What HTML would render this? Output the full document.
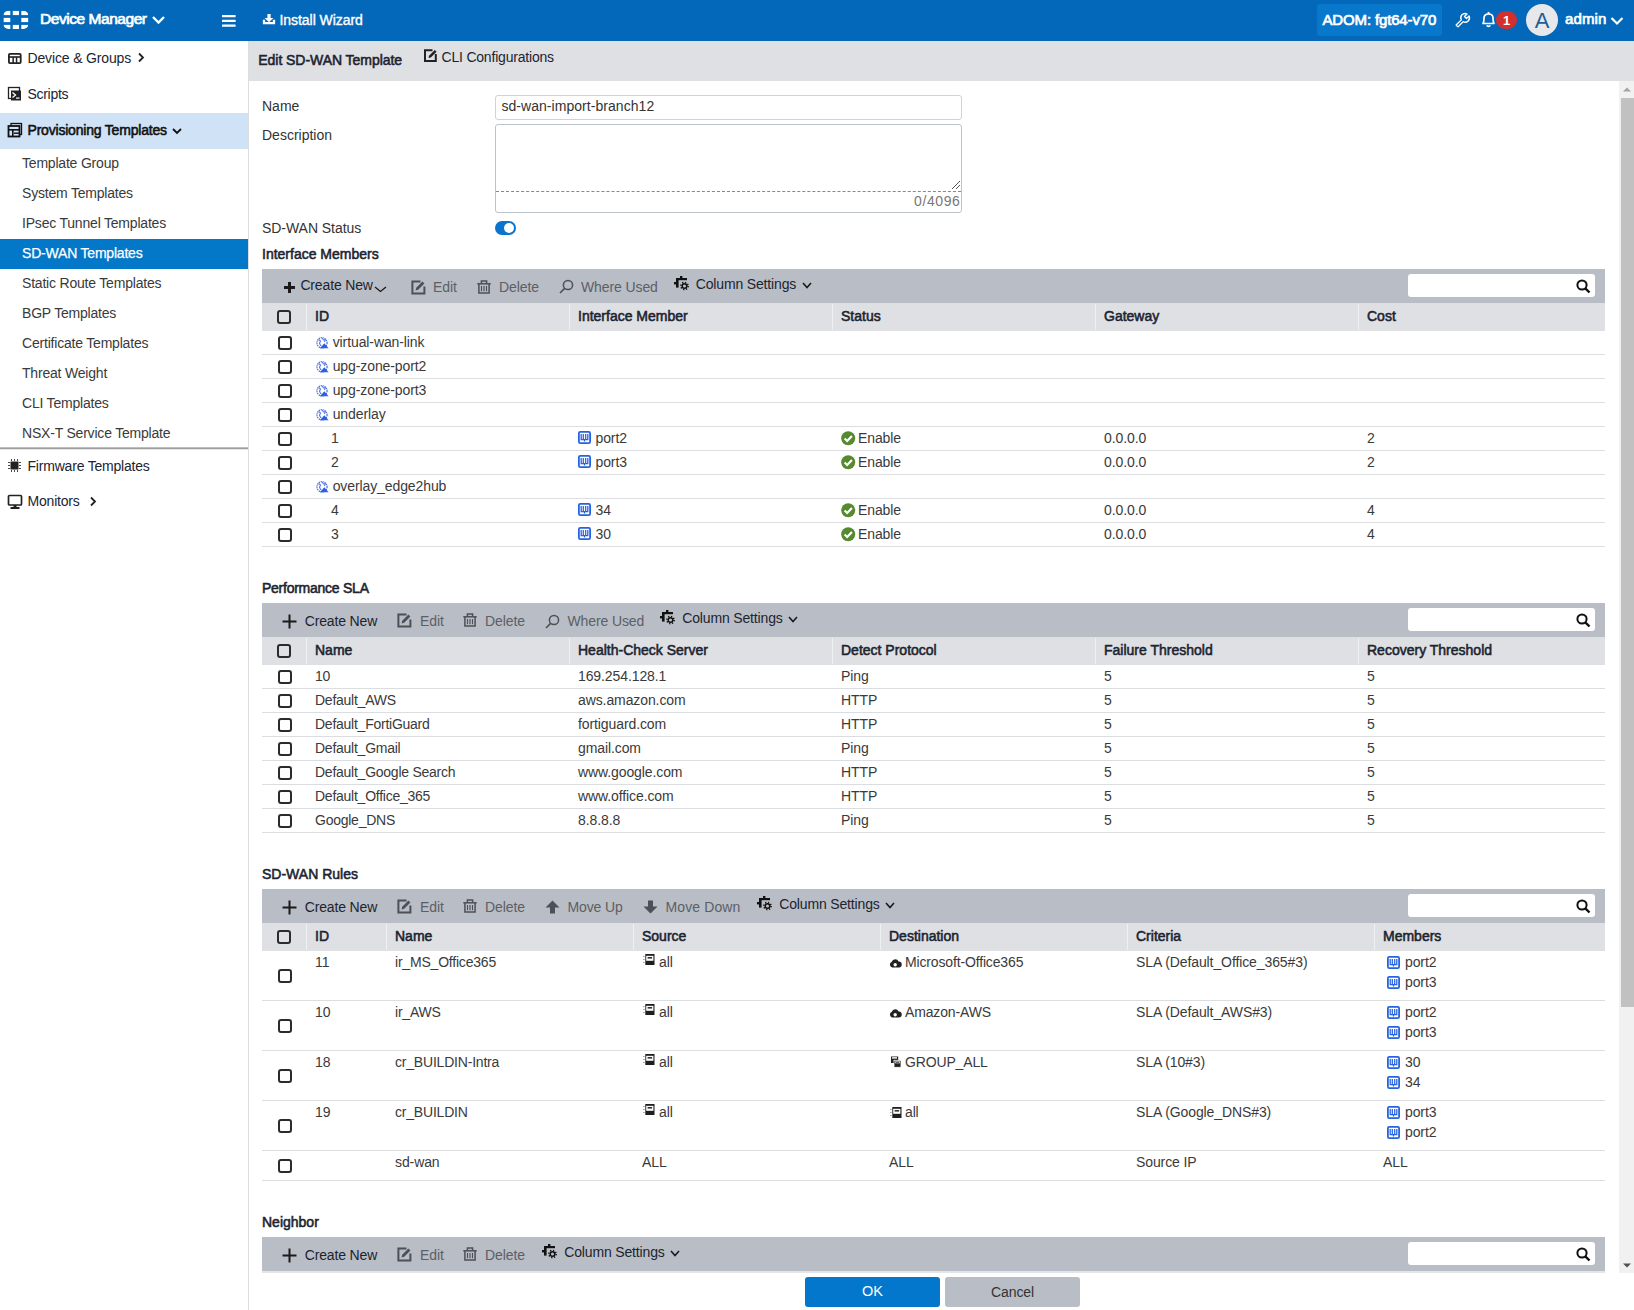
<!DOCTYPE html>
<html><head><meta charset="utf-8">
<style>
*{box-sizing:border-box;margin:0;padding:0}
html,body{width:1634px;height:1310px;overflow:hidden;background:#fff;font-family:"Liberation Sans",sans-serif;font-size:14px;color:#333}
.t{position:absolute;white-space:nowrap}
.r{position:absolute;display:block}
</style></head>
<body>

<div class="r" style="left:0px;top:0px;width:1634px;height:41px;background:#0368b9;"></div>
<svg class="r" style="left:0px;top:0px;" width="34" height="40" viewBox="0 0 34 40"><defs><clipPath id="lc"><rect x="3.4" y="10.7" width="25" height="18.3" rx="5" ry="5"/></clipPath></defs><g clip-path="url(#lc)"><rect x="3.4" y="10.7" width="6.90" height="4.40" fill="#fff"/><rect x="3.4" y="17.9" width="6.90" height="4.20" fill="#fff"/><rect x="3.4" y="24.9" width="6.90" height="4.10" fill="#fff"/><rect x="12.8" y="10.7" width="6.20" height="4.40" fill="#fff"/><rect x="12.8" y="24.9" width="6.20" height="4.10" fill="#fff"/><rect x="21.3" y="10.7" width="7.10" height="4.40" fill="#fff"/><rect x="21.3" y="17.9" width="7.10" height="4.20" fill="#fff"/><rect x="21.3" y="24.9" width="7.10" height="4.10" fill="#fff"/></g></svg>
<div class="t" style="left:40px;top:11.38px;font-size:15.5px;line-height:15.5px;color:#fff;letter-spacing:-0.45px;-webkit-text-stroke:0.7px #fff;">Device Manager</div>
<svg class="r" style="left:151px;top:15px;" width="15" height="10" viewBox="0 0 15 10"><path d="M2 2 L7.5 7.5 L13 2" stroke="#fff" stroke-width="2.4" fill="none"/></svg>
<svg class="r" style="left:221px;top:13px;" width="16" height="16" viewBox="0 0 16 16"><rect x="1" y="2" width="13.6" height="2.2" rx="0.5" fill="#fff"/><rect x="1" y="6.8" width="13.6" height="2.2" rx="0.5" fill="#fff"/><rect x="1" y="11.5" width="13.6" height="2.2" rx="0.5" fill="#fff"/></svg>
<svg class="r" style="left:262px;top:13px;" width="14" height="12" viewBox="0 0 14 12"><rect x="5.4" y="1" width="3.2" height="4.5" fill="#fff"/><path d="M2.6 5 H11.4 L7 9.3 Z" fill="#fff"/><path d="M2 6.8 V10.1 H12 V6.8" stroke="#fff" stroke-width="2.3" fill="none"/></svg>
<div class="t" style="left:279.5px;top:12.65px;font-size:14px;line-height:14px;color:#fff;letter-spacing:-0.05px;-webkit-text-stroke:0.35px #fff;">Install Wizard</div>
<div class="r" style="left:1317px;top:4px;width:125px;height:32px;background:#0878cc;border-radius:3px;"></div>
<div class="t" style="left:1322.5px;top:11.90px;font-size:15px;line-height:15px;color:#fff;letter-spacing:-0.15px;-webkit-text-stroke:0.7px #fff;">ADOM: fgt64-v70</div>
<svg class="r" style="left:1453px;top:11px;" width="19" height="19" viewBox="0 0 19 19"><g transform="translate(9.5 9.5) rotate(45) translate(-8 -8.5)"><path d="M6.7 16.2 L6.7 8.9 A4.3 4.3 0 0 1 6.6 0.7 L6.6 4.3 L9.4 4.3 L9.4 0.7 A4.3 4.3 0 0 1 9.3 8.9 L9.3 16.2 Z" stroke="#fff" stroke-width="1.35" fill="none" stroke-linejoin="round"/></g></svg>
<svg class="r" style="left:1480px;top:11px;" width="17" height="17" viewBox="0 0 17 17"><path d="M3 12.5 C4 11 4 9 4 7 C4 4.5 5.8 3 8.5 3 C11.2 3 13 4.5 13 7 C13 9 13 11 14 12.5 Z" stroke="#fff" stroke-width="1.7" fill="none" stroke-linejoin="round"/><path d="M6.8 14.2 A1.8 1.8 0 0 0 10.2 14.2" stroke="#fff" stroke-width="1.6" fill="none"/><rect x="7.6" y="1" width="1.8" height="2.2" fill="#fff"/></svg>
<svg class="r" style="left:1496px;top:11px;" width="21" height="18" viewBox="0 0 21 18"><rect x="0" y="0" width="21" height="18" rx="9" fill="#d32f2f"/></svg>
<div class="t" style="left:1206.5px;width:600px;text-align:center;top:13.50px;font-size:13px;line-height:13px;font-weight:bold;color:#fff;">1</div>
<svg class="r" style="left:1526px;top:4px;" width="32" height="32" viewBox="0 0 32 32"><circle cx="16" cy="16" r="16" fill="#e6e8ec"/></svg>
<div class="t" style="left:1242px;width:600px;text-align:center;top:9.88px;font-size:22px;line-height:22px;color:#235e94;">A</div>
<div class="t" style="left:1565px;top:11.30px;font-size:15px;line-height:15px;color:#fff;letter-spacing:0.1px;-webkit-text-stroke:0.7px #fff;">admin</div>
<svg class="r" style="left:1609px;top:16px;" width="16" height="10" viewBox="0 0 16 10"><path d="M2.5 2 L8 7.5 L13.5 2" stroke="#fff" stroke-width="2.2" fill="none"/></svg>
<div class="r" style="left:248px;top:41px;width:1px;height:1269px;background:#dcdde1;"></div>
<svg class="r" style="left:7px;top:52px;" width="15" height="12" viewBox="0 0 15 12"><rect x="1.9" y="1.9" width="11.8" height="9.2" rx="1" fill="none" stroke="#222" stroke-width="1.8"/><rect x="2" y="4.2" width="11.6" height="1.6" fill="#222"/><rect x="5.4" y="5" width="1.5" height="6" fill="#222"/><rect x="8.8" y="5" width="1.5" height="6" fill="#222"/></svg>
<div class="t" style="left:27.5px;top:51.15px;font-size:14px;line-height:14px;color:#1c2430;letter-spacing:-0.15px;">Device &amp; Groups</div>
<svg class="r" style="left:136px;top:51px;" width="10" height="12" viewBox="0 0 10 12"><path d="M3 2.5 L7 6.5 L3 10.5" stroke="#222" stroke-width="1.8" fill="none"/></svg>
<svg class="r" style="left:7px;top:86px;" width="16" height="16" viewBox="0 0 16 16"><rect x="1.5" y="1.5" width="11" height="11" fill="none" stroke="#222" stroke-width="1.3"/><rect x="4" y="4.5" width="10" height="10" fill="#222"/><path d="M5.5 6.5 L8.5 9 L5.5 11.5" stroke="#fff" stroke-width="1.3" fill="none"/><rect x="9" y="11.5" width="3.5" height="1.2" fill="#fff"/></svg>
<div class="t" style="left:27.5px;top:87.15px;font-size:14px;line-height:14px;color:#1c2430;letter-spacing:-0.3px;">Scripts</div>
<div class="r" style="left:0px;top:113px;width:248px;height:36px;background:#cfe2f6;"></div>
<svg class="r" style="left:7px;top:122px;" width="16" height="16" viewBox="0 0 16 16"><rect x="4" y="1.5" width="10.5" height="11" fill="none" stroke="#111" stroke-width="1.3"/><rect x="1.5" y="4" width="11" height="10.5" fill="#cfe2f6" stroke="#111" stroke-width="1.8"/><rect x="1.5" y="7" width="11" height="1.6" fill="#111"/><rect x="5" y="7" width="1.6" height="7" fill="#111"/><rect x="7" y="10.5" width="5" height="1.4" fill="#111"/></svg>
<div class="t" style="left:27.5px;top:122.65px;font-size:14px;line-height:14px;color:#111;letter-spacing:-0.2px;-webkit-text-stroke:0.55px #111;">Provisioning Templates</div>
<svg class="r" style="left:171px;top:126px;" width="12" height="10" viewBox="0 0 12 10"><path d="M2 3 L6 7 L10 3" stroke="#111" stroke-width="1.8" fill="none"/></svg>
<div class="t" style="left:22px;top:155.85px;font-size:14px;line-height:14px;color:#3a3a3a;letter-spacing:-0.2px;">Template Group</div>
<div class="t" style="left:22px;top:185.85px;font-size:14px;line-height:14px;color:#3a3a3a;letter-spacing:-0.2px;">System Templates</div>
<div class="t" style="left:22px;top:215.85px;font-size:14px;line-height:14px;color:#3a3a3a;letter-spacing:-0.2px;">IPsec Tunnel Templates</div>
<div class="r" style="left:0px;top:239px;width:248px;height:30px;background:#0377c8;"></div>
<div class="t" style="left:22px;top:245.85px;font-size:14px;line-height:14px;color:#fff;letter-spacing:-0.2px;-webkit-text-stroke:0.25px #fff;">SD-WAN Templates</div>
<div class="t" style="left:22px;top:275.85px;font-size:14px;line-height:14px;color:#3a3a3a;letter-spacing:-0.2px;">Static Route Templates</div>
<div class="t" style="left:22px;top:305.85px;font-size:14px;line-height:14px;color:#3a3a3a;letter-spacing:-0.2px;">BGP Templates</div>
<div class="t" style="left:22px;top:335.85px;font-size:14px;line-height:14px;color:#3a3a3a;letter-spacing:-0.2px;">Certificate Templates</div>
<div class="t" style="left:22px;top:365.85px;font-size:14px;line-height:14px;color:#3a3a3a;letter-spacing:-0.2px;">Threat Weight</div>
<div class="t" style="left:22px;top:395.85px;font-size:14px;line-height:14px;color:#3a3a3a;letter-spacing:-0.2px;">CLI Templates</div>
<div class="t" style="left:22px;top:425.85px;font-size:14px;line-height:14px;color:#3a3a3a;letter-spacing:-0.2px;">NSX-T Service Template</div>
<div class="r" style="left:0px;top:447px;width:248px;height:1px;background:#bdbdbd;"></div>
<div class="r" style="left:0px;top:448px;width:248px;height:1px;background:#9e9e9e;"></div>
<div class="r" style="left:0px;top:449px;width:248px;height:1px;background:#e6e6e6;"></div>
<svg class="r" style="left:7px;top:458px;" width="15" height="15" viewBox="0 0 15 15"><rect x="3.5" y="3.5" width="8" height="8" fill="#222"/><path d="M1 4.5 H3 M1 7.5 H3 M1 10.5 H3 M12 4.5 H14 M12 7.5 H14 M12 10.5 H14 M4.5 1 V3 M7.5 1 V3 M10.5 1 V3 M4.5 12 V14 M7.5 12 V14 M10.5 12 V14" stroke="#333" stroke-width="0.9"/></svg>
<div class="t" style="left:27.5px;top:458.65px;font-size:14px;line-height:14px;color:#1c2430;letter-spacing:-0.2px;">Firmware Templates</div>
<svg class="r" style="left:7px;top:494px;" width="16" height="16" viewBox="0 0 16 16"><rect x="1.5" y="1.5" width="13" height="9.5" rx="1" fill="none" stroke="#222" stroke-width="1.7"/><rect x="6.5" y="11" width="3" height="2" fill="#222"/><rect x="3.5" y="13" width="9" height="2" fill="#222"/></svg>
<div class="t" style="left:27.5px;top:494.35px;font-size:14px;line-height:14px;color:#1c2430;letter-spacing:-0.2px;">Monitors</div>
<svg class="r" style="left:88px;top:495px;" width="10" height="12" viewBox="0 0 10 12"><path d="M3 2.5 L7 6.5 L3 10.5" stroke="#222" stroke-width="1.8" fill="none"/></svg>
<div class="r" style="left:249px;top:41px;width:1385px;height:40px;background:#dfe0e4;"></div>
<div class="t" style="left:258.3px;top:53.45px;font-size:14px;line-height:14px;color:#1c2430;letter-spacing:-0.05px;-webkit-text-stroke:0.55px #1c2430;">Edit SD-WAN Template</div>
<svg class="r" style="left:423px;top:48px;" width="15" height="15" viewBox="0 0 15 15"><path d="M9.5 2.2 H2 V13 H12.8 V6" stroke="#222" stroke-width="2" fill="none"/><path d="M5.5 10 L6 7.8 L11.8 2 L13.6 3.8 L7.8 9.6 Z" fill="#222"/></svg>
<div class="t" style="left:441.5px;top:49.65px;font-size:14px;line-height:14px;color:#1c2430;letter-spacing:-0.2px;">CLI Configurations</div>
<div class="t" style="left:262px;top:99.15px;font-size:14px;line-height:14px;color:#333;">Name</div>
<div class="r" style="left:495px;top:95px;width:467px;height:25px;background:#fff;border:1px solid #cfd2d6;border-radius:3px;"></div>
<div class="t" style="left:501.4px;top:99.15px;font-size:14px;line-height:14px;color:#333;letter-spacing:0.05px;">sd-wan-import-branch12</div>
<div class="t" style="left:262px;top:127.95px;font-size:14px;line-height:14px;color:#333;">Description</div>
<div class="r" style="left:495px;top:124px;width:467px;height:89px;background:#fff;border:1px solid #bcc3ca;border-radius:3px;"></div>
<div class="r" style="left:496px;top:191px;width:465px;height:0;border-top:1px dashed #888;"></div>
<svg class="r" style="left:950px;top:180px;" width="11" height="10" viewBox="0 0 11 10"><path d="M2 9 L10 1 M6 9 L10 5" stroke="#555" stroke-width="1"/></svg>
<div class="t" style="right:673.5px;top:193.95px;font-size:14px;line-height:14px;color:#777;letter-spacing:0.6px;">0/4096</div>
<div class="t" style="left:262px;top:220.95px;font-size:14px;line-height:14px;color:#333;letter-spacing:-0.05px;">SD-WAN Status</div>
<svg class="r" style="left:495px;top:221px;" width="21" height="14" viewBox="0 0 21 14"><rect x="0" y="0" width="21" height="14" rx="7" fill="#0a74cf"/><circle cx="14" cy="7" r="5" fill="#fff"/></svg>
<div class="t" style="left:262px;top:246.95px;font-size:14px;line-height:14px;color:#1c2430;letter-spacing:0px;-webkit-text-stroke:0.55px #1c2430;">Interface Members</div>
<div class="r" style="left:262px;top:269px;width:1343px;height:34px;background:#b9bdc5;"></div>
<svg class="r" style="left:284.2px;top:282px;" width="11" height="11" viewBox="0 0 11 11"><path d="M5.5 0 V11 M0 5.5 H11" stroke="#1a1a1a" stroke-width="3"/></svg>
<div class="t" style="left:300.4px;top:278.05px;font-size:14px;line-height:14px;color:#1c2430;letter-spacing:-0.15px;">Create New</div>
<svg class="r" style="left:374px;top:285.5px;" width="13" height="7" viewBox="0 0 13 7"><path d="M1 1 L6.5 5.5 L12 1" stroke="#1a1a1a" stroke-width="1.35" fill="none"/></svg>
<svg class="r" style="left:411px;top:279.7px;" width="15" height="15" viewBox="0 0 15 15"><path d="M9.5 1.6 H1.4 V13.6 H13.4 V6.5" stroke="#4d5055" stroke-width="2" fill="none" stroke-linejoin="miter"/><path d="M4.6 10.4 L5.2 7.8 L11.4 1.6 L13.4 3.6 L7.2 9.8 Z" fill="#4d5055"/></svg>
<div class="t" style="left:433px;top:280.45px;font-size:14px;line-height:14px;color:#5c6066;letter-spacing:-0.1px;">Edit</div>
<svg class="r" style="left:477px;top:279.5px;" width="14" height="15" viewBox="0 0 14 15"><path d="M0.3 3.8 H13.7" stroke="#4d5055" stroke-width="1.5"/><path d="M4.4 3.6 V0.9 H9.6 V3.6" stroke="#4d5055" stroke-width="1.5" fill="none"/><path d="M1.9 4 V13.1 H12.1 V4" stroke="#4d5055" stroke-width="1.5" fill="none"/><path d="M4.5 6 V11.3 M7 6 V11.3 M9.5 6 V11.3" stroke="#4d5055" stroke-width="1.15"/></svg>
<div class="t" style="left:499px;top:280.45px;font-size:14px;line-height:14px;color:#5c6066;letter-spacing:-0.1px;">Delete</div>
<svg class="r" style="left:559px;top:279.2px;" width="15" height="15" viewBox="0 0 15 15"><circle cx="9" cy="6" r="4.6" stroke="#4d5055" stroke-width="1.5" fill="none"/><path d="M5.6 9.4 L1 14" stroke="#4d5055" stroke-width="1.6"/></svg>
<div class="t" style="left:581px;top:280.45px;font-size:14px;line-height:14px;color:#5c6066;letter-spacing:-0.1px;">Where Used</div>
<svg class="r" style="left:673.8px;top:274.8px;" width="16" height="16" viewBox="0 0 16 16"><rect x="2" y="3" width="11" height="2.2" fill="#111"/><rect x="6" y="1" width="2.4" height="2.2" fill="#111"/><rect x="2" y="3" width="2.6" height="9.6" fill="#111"/><rect x="0" y="7" width="2.2" height="2.4" fill="#111"/><circle cx="10.5" cy="11" r="2.3" fill="none" stroke="#111" stroke-width="1.5"/><circle cx="10.5" cy="11" r="3.6" fill="none" stroke="#111" stroke-width="1.6" stroke-dasharray="1.2 1.63"/></svg>
<div class="t" style="left:695.7px;top:277.15px;font-size:14px;line-height:14px;color:#1c2430;letter-spacing:-0.15px;">Column Settings</div>
<svg class="r" style="left:802px;top:281.5px;" width="10" height="7" viewBox="0 0 10 7"><path d="M1 1 L5.0 5.5 L9 1" stroke="#1a1a1a" stroke-width="1.6" fill="none"/></svg>
<div class="r" style="left:1408px;top:274px;width:187px;height:23px;background:#fff;border-radius:3px;"></div>
<svg class="r" style="left:1576px;top:279px;" width="15" height="15" viewBox="0 0 15 15"><circle cx="6" cy="6" r="4.6" stroke="#111" stroke-width="2" fill="none"/><path d="M9.3 9.3 L13.5 13.5" stroke="#111" stroke-width="2.4"/></svg>
<div class="r" style="left:262px;top:303px;width:1343px;height:28px;background:#dfe0e4;"></div>
<div class="r" style="left:277px;top:310px;width:14px;height:14px;border:2px solid #2b2b2b;border-radius:3px;background:transparent;"></div>
<div class="r" style="left:306px;top:304px;width:1px;height:26px;background:#eef0f2;"></div>
<div class="r" style="left:569px;top:304px;width:1px;height:26px;background:#eef0f2;"></div>
<div class="r" style="left:832px;top:304px;width:1px;height:26px;background:#eef0f2;"></div>
<div class="r" style="left:1095px;top:304px;width:1px;height:26px;background:#eef0f2;"></div>
<div class="r" style="left:1358px;top:304px;width:1px;height:26px;background:#eef0f2;"></div>
<div class="t" style="left:315px;top:309.45px;font-size:14px;line-height:14px;color:#1c2430;letter-spacing:0px;-webkit-text-stroke:0.55px #1c2430;">ID</div>
<div class="t" style="left:578px;top:309.45px;font-size:14px;line-height:14px;color:#1c2430;letter-spacing:0px;-webkit-text-stroke:0.55px #1c2430;">Interface Member</div>
<div class="t" style="left:841px;top:309.45px;font-size:14px;line-height:14px;color:#1c2430;letter-spacing:0px;-webkit-text-stroke:0.55px #1c2430;">Status</div>
<div class="t" style="left:1104px;top:309.45px;font-size:14px;line-height:14px;color:#1c2430;letter-spacing:0px;-webkit-text-stroke:0.55px #1c2430;">Gateway</div>
<div class="t" style="left:1367px;top:309.45px;font-size:14px;line-height:14px;color:#1c2430;letter-spacing:0px;-webkit-text-stroke:0.55px #1c2430;">Cost</div>
<div class="r" style="left:278px;top:336px;width:14px;height:14px;border:2px solid #2b2b2b;border-radius:3px;background:#fff;"></div>
<svg class="r" style="left:316px;top:337px;" width="13" height="12" viewBox="0 0 13 12"><circle cx="6" cy="5.8" r="5.1" fill="none" stroke="#4a6ee8" stroke-width="1.2" stroke-dasharray="1.3 0.7"/><path d="M2.5 2.5 L4.5 4 L3.5 6.5 L5 9 M6 1 L7.5 3 L10 2.5 M8 4.5 L9.5 3.5" stroke="#5577ea" stroke-width="1.1" fill="none"/><path d="M3.8 11.2 L8.3 6.3 L12.6 11.2 Z" fill="#2a5fe6"/></svg>
<div class="t" style="left:332.7px;top:335.35px;font-size:14px;line-height:14px;color:#3a3a3a;letter-spacing:-0.1px;">virtual-wan-link</div>
<div class="r" style="left:262px;top:354px;width:1343px;height:1px;background:#dcdde0;"></div>
<div class="r" style="left:278px;top:360px;width:14px;height:14px;border:2px solid #2b2b2b;border-radius:3px;background:#fff;"></div>
<svg class="r" style="left:316px;top:361px;" width="13" height="12" viewBox="0 0 13 12"><circle cx="6" cy="5.8" r="5.1" fill="none" stroke="#4a6ee8" stroke-width="1.2" stroke-dasharray="1.3 0.7"/><path d="M2.5 2.5 L4.5 4 L3.5 6.5 L5 9 M6 1 L7.5 3 L10 2.5 M8 4.5 L9.5 3.5" stroke="#5577ea" stroke-width="1.1" fill="none"/><path d="M3.8 11.2 L8.3 6.3 L12.6 11.2 Z" fill="#2a5fe6"/></svg>
<div class="t" style="left:332.7px;top:359.35px;font-size:14px;line-height:14px;color:#3a3a3a;letter-spacing:-0.1px;">upg-zone-port2</div>
<div class="r" style="left:262px;top:378px;width:1343px;height:1px;background:#dcdde0;"></div>
<div class="r" style="left:278px;top:384px;width:14px;height:14px;border:2px solid #2b2b2b;border-radius:3px;background:#fff;"></div>
<svg class="r" style="left:316px;top:385px;" width="13" height="12" viewBox="0 0 13 12"><circle cx="6" cy="5.8" r="5.1" fill="none" stroke="#4a6ee8" stroke-width="1.2" stroke-dasharray="1.3 0.7"/><path d="M2.5 2.5 L4.5 4 L3.5 6.5 L5 9 M6 1 L7.5 3 L10 2.5 M8 4.5 L9.5 3.5" stroke="#5577ea" stroke-width="1.1" fill="none"/><path d="M3.8 11.2 L8.3 6.3 L12.6 11.2 Z" fill="#2a5fe6"/></svg>
<div class="t" style="left:332.7px;top:383.35px;font-size:14px;line-height:14px;color:#3a3a3a;letter-spacing:-0.1px;">upg-zone-port3</div>
<div class="r" style="left:262px;top:402px;width:1343px;height:1px;background:#dcdde0;"></div>
<div class="r" style="left:278px;top:408px;width:14px;height:14px;border:2px solid #2b2b2b;border-radius:3px;background:#fff;"></div>
<svg class="r" style="left:316px;top:409px;" width="13" height="12" viewBox="0 0 13 12"><circle cx="6" cy="5.8" r="5.1" fill="none" stroke="#4a6ee8" stroke-width="1.2" stroke-dasharray="1.3 0.7"/><path d="M2.5 2.5 L4.5 4 L3.5 6.5 L5 9 M6 1 L7.5 3 L10 2.5 M8 4.5 L9.5 3.5" stroke="#5577ea" stroke-width="1.1" fill="none"/><path d="M3.8 11.2 L8.3 6.3 L12.6 11.2 Z" fill="#2a5fe6"/></svg>
<div class="t" style="left:332.7px;top:407.35px;font-size:14px;line-height:14px;color:#3a3a3a;letter-spacing:-0.1px;">underlay</div>
<div class="r" style="left:262px;top:426px;width:1343px;height:1px;background:#dcdde0;"></div>
<div class="r" style="left:278px;top:432px;width:14px;height:14px;border:2px solid #2b2b2b;border-radius:3px;background:#fff;"></div>
<div class="t" style="left:331px;top:431.35px;font-size:14px;line-height:14px;color:#3a3a3a;letter-spacing:-0.1px;">1</div>
<svg class="r" style="left:578px;top:431px;" width="13" height="13" viewBox="0 0 13 13"><rect x="0.9" y="0.9" width="11.2" height="11.2" rx="1.4" fill="none" stroke="#2563e3" stroke-width="1.8"/><path d="M3.2 3 V8.6 H9.8 V3 M5.3 3 V8.6 M7.7 3 V8.6 M6.5 8.6 V10.5" stroke="#2563e3" stroke-width="1.25" fill="none"/></svg>
<div class="t" style="left:595.5px;top:431.35px;font-size:14px;line-height:14px;color:#3a3a3a;letter-spacing:-0.1px;">port2</div>
<svg class="r" style="left:840.5px;top:431px;" width="15" height="15" viewBox="0 0 15 15"><circle cx="7.2" cy="7.2" r="7" fill="#578a2f"/><path d="M3.6 7.5 L6.2 10 L10.9 5" stroke="#fff" stroke-width="2.1" fill="none"/></svg>
<div class="t" style="left:858px;top:431.35px;font-size:14px;line-height:14px;color:#3a3a3a;letter-spacing:-0.1px;">Enable</div>
<div class="t" style="left:1104px;top:431.35px;font-size:14px;line-height:14px;color:#3a3a3a;letter-spacing:-0.1px;">0.0.0.0</div>
<div class="t" style="left:1367px;top:431.35px;font-size:14px;line-height:14px;color:#3a3a3a;letter-spacing:-0.1px;">2</div>
<div class="r" style="left:262px;top:450px;width:1343px;height:1px;background:#dcdde0;"></div>
<div class="r" style="left:278px;top:456px;width:14px;height:14px;border:2px solid #2b2b2b;border-radius:3px;background:#fff;"></div>
<div class="t" style="left:331px;top:455.35px;font-size:14px;line-height:14px;color:#3a3a3a;letter-spacing:-0.1px;">2</div>
<svg class="r" style="left:578px;top:455px;" width="13" height="13" viewBox="0 0 13 13"><rect x="0.9" y="0.9" width="11.2" height="11.2" rx="1.4" fill="none" stroke="#2563e3" stroke-width="1.8"/><path d="M3.2 3 V8.6 H9.8 V3 M5.3 3 V8.6 M7.7 3 V8.6 M6.5 8.6 V10.5" stroke="#2563e3" stroke-width="1.25" fill="none"/></svg>
<div class="t" style="left:595.5px;top:455.35px;font-size:14px;line-height:14px;color:#3a3a3a;letter-spacing:-0.1px;">port3</div>
<svg class="r" style="left:840.5px;top:455px;" width="15" height="15" viewBox="0 0 15 15"><circle cx="7.2" cy="7.2" r="7" fill="#578a2f"/><path d="M3.6 7.5 L6.2 10 L10.9 5" stroke="#fff" stroke-width="2.1" fill="none"/></svg>
<div class="t" style="left:858px;top:455.35px;font-size:14px;line-height:14px;color:#3a3a3a;letter-spacing:-0.1px;">Enable</div>
<div class="t" style="left:1104px;top:455.35px;font-size:14px;line-height:14px;color:#3a3a3a;letter-spacing:-0.1px;">0.0.0.0</div>
<div class="t" style="left:1367px;top:455.35px;font-size:14px;line-height:14px;color:#3a3a3a;letter-spacing:-0.1px;">2</div>
<div class="r" style="left:262px;top:474px;width:1343px;height:1px;background:#dcdde0;"></div>
<div class="r" style="left:278px;top:480px;width:14px;height:14px;border:2px solid #2b2b2b;border-radius:3px;background:#fff;"></div>
<svg class="r" style="left:316px;top:481px;" width="13" height="12" viewBox="0 0 13 12"><circle cx="6" cy="5.8" r="5.1" fill="none" stroke="#4a6ee8" stroke-width="1.2" stroke-dasharray="1.3 0.7"/><path d="M2.5 2.5 L4.5 4 L3.5 6.5 L5 9 M6 1 L7.5 3 L10 2.5 M8 4.5 L9.5 3.5" stroke="#5577ea" stroke-width="1.1" fill="none"/><path d="M3.8 11.2 L8.3 6.3 L12.6 11.2 Z" fill="#2a5fe6"/></svg>
<div class="t" style="left:332.7px;top:479.35px;font-size:14px;line-height:14px;color:#3a3a3a;letter-spacing:-0.1px;">overlay_edge2hub</div>
<div class="r" style="left:262px;top:498px;width:1343px;height:1px;background:#dcdde0;"></div>
<div class="r" style="left:278px;top:504px;width:14px;height:14px;border:2px solid #2b2b2b;border-radius:3px;background:#fff;"></div>
<div class="t" style="left:331px;top:503.35px;font-size:14px;line-height:14px;color:#3a3a3a;letter-spacing:-0.1px;">4</div>
<svg class="r" style="left:578px;top:503px;" width="13" height="13" viewBox="0 0 13 13"><rect x="0.9" y="0.9" width="11.2" height="11.2" rx="1.4" fill="none" stroke="#2563e3" stroke-width="1.8"/><path d="M3.2 3 V8.6 H9.8 V3 M5.3 3 V8.6 M7.7 3 V8.6 M6.5 8.6 V10.5" stroke="#2563e3" stroke-width="1.25" fill="none"/></svg>
<div class="t" style="left:595.5px;top:503.35px;font-size:14px;line-height:14px;color:#3a3a3a;letter-spacing:-0.1px;">34</div>
<svg class="r" style="left:840.5px;top:503px;" width="15" height="15" viewBox="0 0 15 15"><circle cx="7.2" cy="7.2" r="7" fill="#578a2f"/><path d="M3.6 7.5 L6.2 10 L10.9 5" stroke="#fff" stroke-width="2.1" fill="none"/></svg>
<div class="t" style="left:858px;top:503.35px;font-size:14px;line-height:14px;color:#3a3a3a;letter-spacing:-0.1px;">Enable</div>
<div class="t" style="left:1104px;top:503.35px;font-size:14px;line-height:14px;color:#3a3a3a;letter-spacing:-0.1px;">0.0.0.0</div>
<div class="t" style="left:1367px;top:503.35px;font-size:14px;line-height:14px;color:#3a3a3a;letter-spacing:-0.1px;">4</div>
<div class="r" style="left:262px;top:522px;width:1343px;height:1px;background:#dcdde0;"></div>
<div class="r" style="left:278px;top:528px;width:14px;height:14px;border:2px solid #2b2b2b;border-radius:3px;background:#fff;"></div>
<div class="t" style="left:331px;top:527.35px;font-size:14px;line-height:14px;color:#3a3a3a;letter-spacing:-0.1px;">3</div>
<svg class="r" style="left:578px;top:527px;" width="13" height="13" viewBox="0 0 13 13"><rect x="0.9" y="0.9" width="11.2" height="11.2" rx="1.4" fill="none" stroke="#2563e3" stroke-width="1.8"/><path d="M3.2 3 V8.6 H9.8 V3 M5.3 3 V8.6 M7.7 3 V8.6 M6.5 8.6 V10.5" stroke="#2563e3" stroke-width="1.25" fill="none"/></svg>
<div class="t" style="left:595.5px;top:527.35px;font-size:14px;line-height:14px;color:#3a3a3a;letter-spacing:-0.1px;">30</div>
<svg class="r" style="left:840.5px;top:527px;" width="15" height="15" viewBox="0 0 15 15"><circle cx="7.2" cy="7.2" r="7" fill="#578a2f"/><path d="M3.6 7.5 L6.2 10 L10.9 5" stroke="#fff" stroke-width="2.1" fill="none"/></svg>
<div class="t" style="left:858px;top:527.35px;font-size:14px;line-height:14px;color:#3a3a3a;letter-spacing:-0.1px;">Enable</div>
<div class="t" style="left:1104px;top:527.35px;font-size:14px;line-height:14px;color:#3a3a3a;letter-spacing:-0.1px;">0.0.0.0</div>
<div class="t" style="left:1367px;top:527.35px;font-size:14px;line-height:14px;color:#3a3a3a;letter-spacing:-0.1px;">4</div>
<div class="r" style="left:262px;top:546px;width:1343px;height:1px;background:#dcdde0;"></div>
<div class="t" style="left:262px;top:581.15px;font-size:14px;line-height:14px;color:#1c2430;letter-spacing:-0.25px;-webkit-text-stroke:0.55px #1c2430;">Performance SLA</div>
<div class="r" style="left:262px;top:603px;width:1343px;height:34px;background:#b9bdc5;"></div>
<svg class="r" style="left:282px;top:613.5px;" width="15" height="15" viewBox="0 0 15 15"><path d="M7.5 0.5 V14.5 M0.5 7.5 H14.5" stroke="#1a1a1a" stroke-width="2"/></svg>
<div class="t" style="left:304.7px;top:614.15px;font-size:14px;line-height:14px;color:#1c2430;letter-spacing:-0.15px;">Create New</div>
<svg class="r" style="left:397px;top:613.0px;" width="15" height="15" viewBox="0 0 15 15"><path d="M9.5 1.6 H1.4 V13.6 H13.4 V6.5" stroke="#4d5055" stroke-width="2" fill="none" stroke-linejoin="miter"/><path d="M4.6 10.4 L5.2 7.8 L11.4 1.6 L13.4 3.6 L7.2 9.8 Z" fill="#4d5055"/></svg>
<div class="t" style="left:420px;top:614.15px;font-size:14px;line-height:14px;color:#5c6066;letter-spacing:-0.1px;">Edit</div>
<svg class="r" style="left:463px;top:613.0px;" width="14" height="15" viewBox="0 0 14 15"><path d="M0.3 3.8 H13.7" stroke="#4d5055" stroke-width="1.5"/><path d="M4.4 3.6 V0.9 H9.6 V3.6" stroke="#4d5055" stroke-width="1.5" fill="none"/><path d="M1.9 4 V13.1 H12.1 V4" stroke="#4d5055" stroke-width="1.5" fill="none"/><path d="M4.5 6 V11.3 M7 6 V11.3 M9.5 6 V11.3" stroke="#4d5055" stroke-width="1.15"/></svg>
<div class="t" style="left:485px;top:614.15px;font-size:14px;line-height:14px;color:#5c6066;letter-spacing:-0.1px;">Delete</div>
<svg class="r" style="left:545px;top:614px;" width="15" height="15" viewBox="0 0 15 15"><circle cx="9" cy="6" r="4.6" stroke="#4d5055" stroke-width="1.5" fill="none"/><path d="M5.6 9.4 L1 14" stroke="#4d5055" stroke-width="1.6"/></svg>
<div class="t" style="left:567.4px;top:614.15px;font-size:14px;line-height:14px;color:#5c6066;letter-spacing:-0.1px;">Where Used</div>
<svg class="r" style="left:659.8px;top:609.3px;" width="16" height="16" viewBox="0 0 16 16"><rect x="2" y="3" width="11" height="2.2" fill="#111"/><rect x="6" y="1" width="2.4" height="2.2" fill="#111"/><rect x="2" y="3" width="2.6" height="9.6" fill="#111"/><rect x="0" y="7" width="2.2" height="2.4" fill="#111"/><circle cx="10.5" cy="11" r="2.3" fill="none" stroke="#111" stroke-width="1.5"/><circle cx="10.5" cy="11" r="3.6" fill="none" stroke="#111" stroke-width="1.6" stroke-dasharray="1.2 1.63"/></svg>
<div class="t" style="left:682.2px;top:610.65px;font-size:14px;line-height:14px;color:#1c2430;letter-spacing:-0.15px;">Column Settings</div>
<svg class="r" style="left:788px;top:615.5px;" width="10" height="7" viewBox="0 0 10 7"><path d="M1 1 L5.0 5.5 L9 1" stroke="#1a1a1a" stroke-width="1.6" fill="none"/></svg>
<div class="r" style="left:1408px;top:608px;width:187px;height:23px;background:#fff;border-radius:3px;"></div>
<svg class="r" style="left:1576px;top:613px;" width="15" height="15" viewBox="0 0 15 15"><circle cx="6" cy="6" r="4.6" stroke="#111" stroke-width="2" fill="none"/><path d="M9.3 9.3 L13.5 13.5" stroke="#111" stroke-width="2.4"/></svg>
<div class="r" style="left:262px;top:637px;width:1343px;height:28px;background:#dfe0e4;"></div>
<div class="r" style="left:277px;top:644px;width:14px;height:14px;border:2px solid #2b2b2b;border-radius:3px;background:transparent;"></div>
<div class="r" style="left:306px;top:638px;width:1px;height:26px;background:#eef0f2;"></div>
<div class="r" style="left:569px;top:638px;width:1px;height:26px;background:#eef0f2;"></div>
<div class="r" style="left:832px;top:638px;width:1px;height:26px;background:#eef0f2;"></div>
<div class="r" style="left:1095px;top:638px;width:1px;height:26px;background:#eef0f2;"></div>
<div class="r" style="left:1358px;top:638px;width:1px;height:26px;background:#eef0f2;"></div>
<div class="t" style="left:315px;top:643.45px;font-size:14px;line-height:14px;color:#1c2430;letter-spacing:0px;-webkit-text-stroke:0.55px #1c2430;">Name</div>
<div class="t" style="left:578px;top:643.45px;font-size:14px;line-height:14px;color:#1c2430;letter-spacing:0px;-webkit-text-stroke:0.55px #1c2430;">Health-Check Server</div>
<div class="t" style="left:841px;top:643.45px;font-size:14px;line-height:14px;color:#1c2430;letter-spacing:0px;-webkit-text-stroke:0.55px #1c2430;">Detect Protocol</div>
<div class="t" style="left:1104px;top:643.45px;font-size:14px;line-height:14px;color:#1c2430;letter-spacing:0px;-webkit-text-stroke:0.55px #1c2430;">Failure Threshold</div>
<div class="t" style="left:1367px;top:643.45px;font-size:14px;line-height:14px;color:#1c2430;letter-spacing:0px;-webkit-text-stroke:0.55px #1c2430;">Recovery Threshold</div>
<div class="r" style="left:278px;top:670px;width:14px;height:14px;border:2px solid #2b2b2b;border-radius:3px;background:#fff;"></div>
<div class="t" style="left:315px;top:669.35px;font-size:14px;line-height:14px;color:#3a3a3a;letter-spacing:-0.25px;">10</div>
<div class="t" style="left:578px;top:669.35px;font-size:14px;line-height:14px;color:#3a3a3a;letter-spacing:-0.1px;">169.254.128.1</div>
<div class="t" style="left:841px;top:669.35px;font-size:14px;line-height:14px;color:#3a3a3a;letter-spacing:-0.1px;">Ping</div>
<div class="t" style="left:1104px;top:669.35px;font-size:14px;line-height:14px;color:#3a3a3a;letter-spacing:-0.1px;">5</div>
<div class="t" style="left:1367px;top:669.35px;font-size:14px;line-height:14px;color:#3a3a3a;letter-spacing:-0.1px;">5</div>
<div class="r" style="left:262px;top:688px;width:1343px;height:1px;background:#dcdde0;"></div>
<div class="r" style="left:278px;top:694px;width:14px;height:14px;border:2px solid #2b2b2b;border-radius:3px;background:#fff;"></div>
<div class="t" style="left:315px;top:693.35px;font-size:14px;line-height:14px;color:#3a3a3a;letter-spacing:-0.25px;">Default_AWS</div>
<div class="t" style="left:578px;top:693.35px;font-size:14px;line-height:14px;color:#3a3a3a;letter-spacing:-0.1px;">aws.amazon.com</div>
<div class="t" style="left:841px;top:693.35px;font-size:14px;line-height:14px;color:#3a3a3a;letter-spacing:-0.1px;">HTTP</div>
<div class="t" style="left:1104px;top:693.35px;font-size:14px;line-height:14px;color:#3a3a3a;letter-spacing:-0.1px;">5</div>
<div class="t" style="left:1367px;top:693.35px;font-size:14px;line-height:14px;color:#3a3a3a;letter-spacing:-0.1px;">5</div>
<div class="r" style="left:262px;top:712px;width:1343px;height:1px;background:#dcdde0;"></div>
<div class="r" style="left:278px;top:718px;width:14px;height:14px;border:2px solid #2b2b2b;border-radius:3px;background:#fff;"></div>
<div class="t" style="left:315px;top:717.35px;font-size:14px;line-height:14px;color:#3a3a3a;letter-spacing:-0.25px;">Default_FortiGuard</div>
<div class="t" style="left:578px;top:717.35px;font-size:14px;line-height:14px;color:#3a3a3a;letter-spacing:-0.1px;">fortiguard.com</div>
<div class="t" style="left:841px;top:717.35px;font-size:14px;line-height:14px;color:#3a3a3a;letter-spacing:-0.1px;">HTTP</div>
<div class="t" style="left:1104px;top:717.35px;font-size:14px;line-height:14px;color:#3a3a3a;letter-spacing:-0.1px;">5</div>
<div class="t" style="left:1367px;top:717.35px;font-size:14px;line-height:14px;color:#3a3a3a;letter-spacing:-0.1px;">5</div>
<div class="r" style="left:262px;top:736px;width:1343px;height:1px;background:#dcdde0;"></div>
<div class="r" style="left:278px;top:742px;width:14px;height:14px;border:2px solid #2b2b2b;border-radius:3px;background:#fff;"></div>
<div class="t" style="left:315px;top:741.35px;font-size:14px;line-height:14px;color:#3a3a3a;letter-spacing:-0.25px;">Default_Gmail</div>
<div class="t" style="left:578px;top:741.35px;font-size:14px;line-height:14px;color:#3a3a3a;letter-spacing:-0.1px;">gmail.com</div>
<div class="t" style="left:841px;top:741.35px;font-size:14px;line-height:14px;color:#3a3a3a;letter-spacing:-0.1px;">Ping</div>
<div class="t" style="left:1104px;top:741.35px;font-size:14px;line-height:14px;color:#3a3a3a;letter-spacing:-0.1px;">5</div>
<div class="t" style="left:1367px;top:741.35px;font-size:14px;line-height:14px;color:#3a3a3a;letter-spacing:-0.1px;">5</div>
<div class="r" style="left:262px;top:760px;width:1343px;height:1px;background:#dcdde0;"></div>
<div class="r" style="left:278px;top:766px;width:14px;height:14px;border:2px solid #2b2b2b;border-radius:3px;background:#fff;"></div>
<div class="t" style="left:315px;top:765.35px;font-size:14px;line-height:14px;color:#3a3a3a;letter-spacing:-0.25px;">Default_Google Search</div>
<div class="t" style="left:578px;top:765.35px;font-size:14px;line-height:14px;color:#3a3a3a;letter-spacing:-0.1px;">www.google.com</div>
<div class="t" style="left:841px;top:765.35px;font-size:14px;line-height:14px;color:#3a3a3a;letter-spacing:-0.1px;">HTTP</div>
<div class="t" style="left:1104px;top:765.35px;font-size:14px;line-height:14px;color:#3a3a3a;letter-spacing:-0.1px;">5</div>
<div class="t" style="left:1367px;top:765.35px;font-size:14px;line-height:14px;color:#3a3a3a;letter-spacing:-0.1px;">5</div>
<div class="r" style="left:262px;top:784px;width:1343px;height:1px;background:#dcdde0;"></div>
<div class="r" style="left:278px;top:790px;width:14px;height:14px;border:2px solid #2b2b2b;border-radius:3px;background:#fff;"></div>
<div class="t" style="left:315px;top:789.35px;font-size:14px;line-height:14px;color:#3a3a3a;letter-spacing:-0.25px;">Default_Office_365</div>
<div class="t" style="left:578px;top:789.35px;font-size:14px;line-height:14px;color:#3a3a3a;letter-spacing:-0.1px;">www.office.com</div>
<div class="t" style="left:841px;top:789.35px;font-size:14px;line-height:14px;color:#3a3a3a;letter-spacing:-0.1px;">HTTP</div>
<div class="t" style="left:1104px;top:789.35px;font-size:14px;line-height:14px;color:#3a3a3a;letter-spacing:-0.1px;">5</div>
<div class="t" style="left:1367px;top:789.35px;font-size:14px;line-height:14px;color:#3a3a3a;letter-spacing:-0.1px;">5</div>
<div class="r" style="left:262px;top:808px;width:1343px;height:1px;background:#dcdde0;"></div>
<div class="r" style="left:278px;top:814px;width:14px;height:14px;border:2px solid #2b2b2b;border-radius:3px;background:#fff;"></div>
<div class="t" style="left:315px;top:813.35px;font-size:14px;line-height:14px;color:#3a3a3a;letter-spacing:-0.25px;">Google_DNS</div>
<div class="t" style="left:578px;top:813.35px;font-size:14px;line-height:14px;color:#3a3a3a;letter-spacing:-0.1px;">8.8.8.8</div>
<div class="t" style="left:841px;top:813.35px;font-size:14px;line-height:14px;color:#3a3a3a;letter-spacing:-0.1px;">Ping</div>
<div class="t" style="left:1104px;top:813.35px;font-size:14px;line-height:14px;color:#3a3a3a;letter-spacing:-0.1px;">5</div>
<div class="t" style="left:1367px;top:813.35px;font-size:14px;line-height:14px;color:#3a3a3a;letter-spacing:-0.1px;">5</div>
<div class="r" style="left:262px;top:832px;width:1343px;height:1px;background:#dcdde0;"></div>
<div class="t" style="left:262px;top:867.45px;font-size:14px;line-height:14px;color:#1c2430;letter-spacing:0px;-webkit-text-stroke:0.55px #1c2430;">SD-WAN Rules</div>
<div class="r" style="left:262px;top:889px;width:1343px;height:34px;background:#b9bdc5;"></div>
<svg class="r" style="left:282px;top:899.5px;" width="15" height="15" viewBox="0 0 15 15"><path d="M7.5 0.5 V14.5 M0.5 7.5 H14.5" stroke="#1a1a1a" stroke-width="2"/></svg>
<div class="t" style="left:304.7px;top:900.15px;font-size:14px;line-height:14px;color:#1c2430;letter-spacing:-0.15px;">Create New</div>
<svg class="r" style="left:397px;top:899.0px;" width="15" height="15" viewBox="0 0 15 15"><path d="M9.5 1.6 H1.4 V13.6 H13.4 V6.5" stroke="#4d5055" stroke-width="2" fill="none" stroke-linejoin="miter"/><path d="M4.6 10.4 L5.2 7.8 L11.4 1.6 L13.4 3.6 L7.2 9.8 Z" fill="#4d5055"/></svg>
<div class="t" style="left:420px;top:900.15px;font-size:14px;line-height:14px;color:#5c6066;letter-spacing:-0.1px;">Edit</div>
<svg class="r" style="left:463px;top:899.0px;" width="14" height="15" viewBox="0 0 14 15"><path d="M0.3 3.8 H13.7" stroke="#4d5055" stroke-width="1.5"/><path d="M4.4 3.6 V0.9 H9.6 V3.6" stroke="#4d5055" stroke-width="1.5" fill="none"/><path d="M1.9 4 V13.1 H12.1 V4" stroke="#4d5055" stroke-width="1.5" fill="none"/><path d="M4.5 6 V11.3 M7 6 V11.3 M9.5 6 V11.3" stroke="#4d5055" stroke-width="1.15"/></svg>
<div class="t" style="left:485px;top:900.15px;font-size:14px;line-height:14px;color:#5c6066;letter-spacing:-0.1px;">Delete</div>
<svg class="r" style="left:545px;top:900px;" width="15" height="14" viewBox="0 0 15 14"><path d="M7.5 0.5 L14.5 7.5 H10 V13.5 H5 V7.5 H0.5 Z" fill="#4d5055"/></svg>
<div class="t" style="left:567.4px;top:900.15px;font-size:14px;line-height:14px;color:#5c6066;letter-spacing:-0.1px;">Move Up</div>
<svg class="r" style="left:643px;top:900px;" width="15" height="14" viewBox="0 0 15 14"><path d="M7.5 13.5 L14.5 6.5 H10 V0.5 H5 V6.5 H0.5 Z" fill="#4d5055"/></svg>
<div class="t" style="left:665.6px;top:900.15px;font-size:14px;line-height:14px;color:#5c6066;letter-spacing:0.1px;">Move Down</div>
<svg class="r" style="left:756.8px;top:895.3px;" width="16" height="16" viewBox="0 0 16 16"><rect x="2" y="3" width="11" height="2.2" fill="#111"/><rect x="6" y="1" width="2.4" height="2.2" fill="#111"/><rect x="2" y="3" width="2.6" height="9.6" fill="#111"/><rect x="0" y="7" width="2.2" height="2.4" fill="#111"/><circle cx="10.5" cy="11" r="2.3" fill="none" stroke="#111" stroke-width="1.5"/><circle cx="10.5" cy="11" r="3.6" fill="none" stroke="#111" stroke-width="1.6" stroke-dasharray="1.2 1.63"/></svg>
<div class="t" style="left:779.2px;top:896.65px;font-size:14px;line-height:14px;color:#1c2430;letter-spacing:-0.15px;">Column Settings</div>
<svg class="r" style="left:885px;top:901.5px;" width="10" height="7" viewBox="0 0 10 7"><path d="M1 1 L5.0 5.5 L9 1" stroke="#1a1a1a" stroke-width="1.6" fill="none"/></svg>
<div class="r" style="left:1408px;top:894px;width:187px;height:23px;background:#fff;border-radius:3px;"></div>
<svg class="r" style="left:1576px;top:899px;" width="15" height="15" viewBox="0 0 15 15"><circle cx="6" cy="6" r="4.6" stroke="#111" stroke-width="2" fill="none"/><path d="M9.3 9.3 L13.5 13.5" stroke="#111" stroke-width="2.4"/></svg>
<div class="r" style="left:262px;top:923px;width:1343px;height:28px;background:#dfe0e4;"></div>
<div class="r" style="left:277px;top:930px;width:14px;height:14px;border:2px solid #2b2b2b;border-radius:3px;background:transparent;"></div>
<div class="r" style="left:306px;top:924px;width:1px;height:26px;background:#eef0f2;"></div>
<div class="r" style="left:386px;top:924px;width:1px;height:26px;background:#eef0f2;"></div>
<div class="r" style="left:633px;top:924px;width:1px;height:26px;background:#eef0f2;"></div>
<div class="r" style="left:880px;top:924px;width:1px;height:26px;background:#eef0f2;"></div>
<div class="r" style="left:1127px;top:924px;width:1px;height:26px;background:#eef0f2;"></div>
<div class="r" style="left:1374px;top:924px;width:1px;height:26px;background:#eef0f2;"></div>
<div class="t" style="left:315px;top:929.45px;font-size:14px;line-height:14px;color:#1c2430;letter-spacing:0px;-webkit-text-stroke:0.55px #1c2430;">ID</div>
<div class="t" style="left:395px;top:929.45px;font-size:14px;line-height:14px;color:#1c2430;letter-spacing:0px;-webkit-text-stroke:0.55px #1c2430;">Name</div>
<div class="t" style="left:642px;top:929.45px;font-size:14px;line-height:14px;color:#1c2430;letter-spacing:0px;-webkit-text-stroke:0.55px #1c2430;">Source</div>
<div class="t" style="left:889px;top:929.45px;font-size:14px;line-height:14px;color:#1c2430;letter-spacing:0px;-webkit-text-stroke:0.55px #1c2430;">Destination</div>
<div class="t" style="left:1136px;top:929.45px;font-size:14px;line-height:14px;color:#1c2430;letter-spacing:0px;-webkit-text-stroke:0.55px #1c2430;">Criteria</div>
<div class="t" style="left:1383px;top:929.45px;font-size:14px;line-height:14px;color:#1c2430;letter-spacing:0px;-webkit-text-stroke:0.55px #1c2430;">Members</div>
<div class="r" style="left:278px;top:969px;width:14px;height:14px;border:2px solid #2b2b2b;border-radius:3px;background:#fff;"></div>
<div class="t" style="left:315px;top:955.05px;font-size:14px;line-height:14px;color:#3a3a3a;letter-spacing:-0.1px;">11</div>
<div class="t" style="left:395px;top:955.05px;font-size:14px;line-height:14px;color:#3a3a3a;letter-spacing:-0.2px;">ir_MS_Office365</div>
<svg class="r" style="left:643px;top:953.2px;" width="12" height="12" viewBox="0 0 12 12"><rect x="2.3" y="1" width="9.2" height="11" fill="#1e1e1e"/><rect x="3.2" y="2.8" width="7.2" height="5" fill="#fff"/><rect x="4.6" y="4" width="4.5" height="1.6" fill="#333"/><path d="M0.9 3 V4 M0.9 6 V7 M0.9 9 V10" stroke="#666" stroke-width="1"/></svg>
<div class="t" style="left:659px;top:955.05px;font-size:14px;line-height:14px;color:#3a3a3a;letter-spacing:-0.1px;">all</div>
<svg class="r" style="left:889px;top:958px;" width="13" height="10" viewBox="0 0 13 10"><path d="M3.2 9.5 A3 3 0 0 1 2.8 3.8 A3.6 3.6 0 0 1 9.6 3.6 A2.9 2.9 0 0 1 10 9.5 Z" fill="#222"/><circle cx="6.2" cy="6.8" r="1.7" fill="#fff"/></svg>
<div class="t" style="left:905px;top:955.05px;font-size:14px;line-height:14px;color:#3a3a3a;letter-spacing:-0.15px;">Microsoft-Office365</div>
<div class="t" style="left:1136px;top:955.05px;font-size:14px;line-height:14px;color:#3a3a3a;letter-spacing:-0.1px;">SLA (Default_Office_365#3)</div>
<svg class="r" style="left:1387px;top:956px;" width="13" height="13" viewBox="0 0 13 13"><rect x="0.9" y="0.9" width="11.2" height="11.2" rx="1.4" fill="none" stroke="#2563e3" stroke-width="1.8"/><path d="M3.2 3 V8.6 H9.8 V3 M5.3 3 V8.6 M7.7 3 V8.6 M6.5 8.6 V10.5" stroke="#2563e3" stroke-width="1.25" fill="none"/></svg>
<div class="t" style="left:1405px;top:955.05px;font-size:14px;line-height:14px;color:#3a3a3a;letter-spacing:-0.1px;">port2</div>
<svg class="r" style="left:1387px;top:976px;" width="13" height="13" viewBox="0 0 13 13"><rect x="0.9" y="0.9" width="11.2" height="11.2" rx="1.4" fill="none" stroke="#2563e3" stroke-width="1.8"/><path d="M3.2 3 V8.6 H9.8 V3 M5.3 3 V8.6 M7.7 3 V8.6 M6.5 8.6 V10.5" stroke="#2563e3" stroke-width="1.25" fill="none"/></svg>
<div class="t" style="left:1405px;top:975.05px;font-size:14px;line-height:14px;color:#3a3a3a;letter-spacing:-0.1px;">port3</div>
<div class="r" style="left:262px;top:1000px;width:1343px;height:1px;background:#dcdde0;"></div>
<div class="r" style="left:278px;top:1019px;width:14px;height:14px;border:2px solid #2b2b2b;border-radius:3px;background:#fff;"></div>
<div class="t" style="left:315px;top:1005.05px;font-size:14px;line-height:14px;color:#3a3a3a;letter-spacing:-0.1px;">10</div>
<div class="t" style="left:395px;top:1005.05px;font-size:14px;line-height:14px;color:#3a3a3a;letter-spacing:-0.2px;">ir_AWS</div>
<svg class="r" style="left:643px;top:1003.2px;" width="12" height="12" viewBox="0 0 12 12"><rect x="2.3" y="1" width="9.2" height="11" fill="#1e1e1e"/><rect x="3.2" y="2.8" width="7.2" height="5" fill="#fff"/><rect x="4.6" y="4" width="4.5" height="1.6" fill="#333"/><path d="M0.9 3 V4 M0.9 6 V7 M0.9 9 V10" stroke="#666" stroke-width="1"/></svg>
<div class="t" style="left:659px;top:1005.05px;font-size:14px;line-height:14px;color:#3a3a3a;letter-spacing:-0.1px;">all</div>
<svg class="r" style="left:889px;top:1008px;" width="13" height="10" viewBox="0 0 13 10"><path d="M3.2 9.5 A3 3 0 0 1 2.8 3.8 A3.6 3.6 0 0 1 9.6 3.6 A2.9 2.9 0 0 1 10 9.5 Z" fill="#222"/><circle cx="6.2" cy="6.8" r="1.7" fill="#fff"/></svg>
<div class="t" style="left:905px;top:1005.05px;font-size:14px;line-height:14px;color:#3a3a3a;letter-spacing:-0.15px;">Amazon-AWS</div>
<div class="t" style="left:1136px;top:1005.05px;font-size:14px;line-height:14px;color:#3a3a3a;letter-spacing:-0.1px;">SLA (Default_AWS#3)</div>
<svg class="r" style="left:1387px;top:1006px;" width="13" height="13" viewBox="0 0 13 13"><rect x="0.9" y="0.9" width="11.2" height="11.2" rx="1.4" fill="none" stroke="#2563e3" stroke-width="1.8"/><path d="M3.2 3 V8.6 H9.8 V3 M5.3 3 V8.6 M7.7 3 V8.6 M6.5 8.6 V10.5" stroke="#2563e3" stroke-width="1.25" fill="none"/></svg>
<div class="t" style="left:1405px;top:1005.05px;font-size:14px;line-height:14px;color:#3a3a3a;letter-spacing:-0.1px;">port2</div>
<svg class="r" style="left:1387px;top:1026px;" width="13" height="13" viewBox="0 0 13 13"><rect x="0.9" y="0.9" width="11.2" height="11.2" rx="1.4" fill="none" stroke="#2563e3" stroke-width="1.8"/><path d="M3.2 3 V8.6 H9.8 V3 M5.3 3 V8.6 M7.7 3 V8.6 M6.5 8.6 V10.5" stroke="#2563e3" stroke-width="1.25" fill="none"/></svg>
<div class="t" style="left:1405px;top:1025.05px;font-size:14px;line-height:14px;color:#3a3a3a;letter-spacing:-0.1px;">port3</div>
<div class="r" style="left:262px;top:1050px;width:1343px;height:1px;background:#dcdde0;"></div>
<div class="r" style="left:278px;top:1069px;width:14px;height:14px;border:2px solid #2b2b2b;border-radius:3px;background:#fff;"></div>
<div class="t" style="left:315px;top:1055.05px;font-size:14px;line-height:14px;color:#3a3a3a;letter-spacing:-0.1px;">18</div>
<div class="t" style="left:395px;top:1055.05px;font-size:14px;line-height:14px;color:#3a3a3a;letter-spacing:-0.2px;">cr_BUILDIN-Intra</div>
<svg class="r" style="left:643px;top:1053.2px;" width="12" height="12" viewBox="0 0 12 12"><rect x="2.3" y="1" width="9.2" height="11" fill="#1e1e1e"/><rect x="3.2" y="2.8" width="7.2" height="5" fill="#fff"/><rect x="4.6" y="4" width="4.5" height="1.6" fill="#333"/><path d="M0.9 3 V4 M0.9 6 V7 M0.9 9 V10" stroke="#666" stroke-width="1"/></svg>
<div class="t" style="left:659px;top:1055.05px;font-size:14px;line-height:14px;color:#3a3a3a;letter-spacing:-0.1px;">all</div>
<svg class="r" style="left:889px;top:1055px;" width="13" height="13" viewBox="0 0 13 13"><rect x="2" y="1.5" width="7.2" height="6.5" fill="#222"/><rect x="3" y="2.2" width="5" height="1.4" fill="#fff"/><rect x="5" y="5.3" width="7" height="7" fill="#222" stroke="#fff" stroke-width="0.8"/><rect x="6.3" y="6.3" width="4.5" height="2" fill="#fff"/><rect x="7" y="6.8" width="3" height="0.9" fill="#222"/></svg>
<div class="t" style="left:905px;top:1055.05px;font-size:14px;line-height:14px;color:#3a3a3a;letter-spacing:-0.15px;">GROUP_ALL</div>
<div class="t" style="left:1136px;top:1055.05px;font-size:14px;line-height:14px;color:#3a3a3a;letter-spacing:-0.1px;">SLA (10#3)</div>
<svg class="r" style="left:1387px;top:1056px;" width="13" height="13" viewBox="0 0 13 13"><rect x="0.9" y="0.9" width="11.2" height="11.2" rx="1.4" fill="none" stroke="#2563e3" stroke-width="1.8"/><path d="M3.2 3 V8.6 H9.8 V3 M5.3 3 V8.6 M7.7 3 V8.6 M6.5 8.6 V10.5" stroke="#2563e3" stroke-width="1.25" fill="none"/></svg>
<div class="t" style="left:1405px;top:1055.05px;font-size:14px;line-height:14px;color:#3a3a3a;letter-spacing:-0.1px;">30</div>
<svg class="r" style="left:1387px;top:1076px;" width="13" height="13" viewBox="0 0 13 13"><rect x="0.9" y="0.9" width="11.2" height="11.2" rx="1.4" fill="none" stroke="#2563e3" stroke-width="1.8"/><path d="M3.2 3 V8.6 H9.8 V3 M5.3 3 V8.6 M7.7 3 V8.6 M6.5 8.6 V10.5" stroke="#2563e3" stroke-width="1.25" fill="none"/></svg>
<div class="t" style="left:1405px;top:1075.05px;font-size:14px;line-height:14px;color:#3a3a3a;letter-spacing:-0.1px;">34</div>
<div class="r" style="left:262px;top:1100px;width:1343px;height:1px;background:#dcdde0;"></div>
<div class="r" style="left:278px;top:1119px;width:14px;height:14px;border:2px solid #2b2b2b;border-radius:3px;background:#fff;"></div>
<div class="t" style="left:315px;top:1105.05px;font-size:14px;line-height:14px;color:#3a3a3a;letter-spacing:-0.1px;">19</div>
<div class="t" style="left:395px;top:1105.05px;font-size:14px;line-height:14px;color:#3a3a3a;letter-spacing:-0.2px;">cr_BUILDIN</div>
<svg class="r" style="left:643px;top:1103.2px;" width="12" height="12" viewBox="0 0 12 12"><rect x="2.3" y="1" width="9.2" height="11" fill="#1e1e1e"/><rect x="3.2" y="2.8" width="7.2" height="5" fill="#fff"/><rect x="4.6" y="4" width="4.5" height="1.6" fill="#333"/><path d="M0.9 3 V4 M0.9 6 V7 M0.9 9 V10" stroke="#666" stroke-width="1"/></svg>
<div class="t" style="left:659px;top:1105.05px;font-size:14px;line-height:14px;color:#3a3a3a;letter-spacing:-0.1px;">all</div>
<svg class="r" style="left:890px;top:1106px;" width="12" height="12" viewBox="0 0 12 12"><rect x="2.3" y="1" width="9.2" height="11" fill="#1e1e1e"/><rect x="3.2" y="2.8" width="7.2" height="5" fill="#fff"/><rect x="4.6" y="4" width="4.5" height="1.6" fill="#333"/><path d="M0.9 3 V4 M0.9 6 V7 M0.9 9 V10" stroke="#666" stroke-width="1"/></svg>
<div class="t" style="left:905px;top:1105.05px;font-size:14px;line-height:14px;color:#3a3a3a;letter-spacing:-0.15px;">all</div>
<div class="t" style="left:1136px;top:1105.05px;font-size:14px;line-height:14px;color:#3a3a3a;letter-spacing:-0.1px;">SLA (Google_DNS#3)</div>
<svg class="r" style="left:1387px;top:1106px;" width="13" height="13" viewBox="0 0 13 13"><rect x="0.9" y="0.9" width="11.2" height="11.2" rx="1.4" fill="none" stroke="#2563e3" stroke-width="1.8"/><path d="M3.2 3 V8.6 H9.8 V3 M5.3 3 V8.6 M7.7 3 V8.6 M6.5 8.6 V10.5" stroke="#2563e3" stroke-width="1.25" fill="none"/></svg>
<div class="t" style="left:1405px;top:1105.05px;font-size:14px;line-height:14px;color:#3a3a3a;letter-spacing:-0.1px;">port3</div>
<svg class="r" style="left:1387px;top:1126px;" width="13" height="13" viewBox="0 0 13 13"><rect x="0.9" y="0.9" width="11.2" height="11.2" rx="1.4" fill="none" stroke="#2563e3" stroke-width="1.8"/><path d="M3.2 3 V8.6 H9.8 V3 M5.3 3 V8.6 M7.7 3 V8.6 M6.5 8.6 V10.5" stroke="#2563e3" stroke-width="1.25" fill="none"/></svg>
<div class="t" style="left:1405px;top:1125.05px;font-size:14px;line-height:14px;color:#3a3a3a;letter-spacing:-0.1px;">port2</div>
<div class="r" style="left:262px;top:1150px;width:1343px;height:1px;background:#dcdde0;"></div>
<div class="r" style="left:278px;top:1158.5px;width:14px;height:14px;border:2px solid #2b2b2b;border-radius:3px;background:#fff;"></div>
<div class="t" style="left:395px;top:1155.05px;font-size:14px;line-height:14px;color:#3a3a3a;letter-spacing:-0.1px;">sd-wan</div>
<div class="t" style="left:642px;top:1155.05px;font-size:14px;line-height:14px;color:#3a3a3a;letter-spacing:-0.1px;">ALL</div>
<div class="t" style="left:889px;top:1155.05px;font-size:14px;line-height:14px;color:#3a3a3a;letter-spacing:-0.1px;">ALL</div>
<div class="t" style="left:1136px;top:1155.05px;font-size:14px;line-height:14px;color:#3a3a3a;letter-spacing:-0.1px;">Source IP</div>
<div class="t" style="left:1383px;top:1155.05px;font-size:14px;line-height:14px;color:#3a3a3a;letter-spacing:-0.1px;">ALL</div>
<div class="r" style="left:262px;top:1180px;width:1343px;height:1px;background:#dcdde0;"></div>
<div class="t" style="left:262px;top:1215.05px;font-size:14px;line-height:14px;color:#1c2430;letter-spacing:0px;-webkit-text-stroke:0.55px #1c2430;">Neighbor</div>
<div class="r" style="left:262px;top:1237px;width:1343px;height:34px;background:#b9bdc5;"></div>
<div class="r" style="left:262px;top:1271px;width:1343px;height:2px;background:#e4e5e8;"></div>
<svg class="r" style="left:282px;top:1247.5px;" width="15" height="15" viewBox="0 0 15 15"><path d="M7.5 0.5 V14.5 M0.5 7.5 H14.5" stroke="#1a1a1a" stroke-width="2"/></svg>
<div class="t" style="left:304.7px;top:1248.15px;font-size:14px;line-height:14px;color:#1c2430;letter-spacing:-0.15px;">Create New</div>
<svg class="r" style="left:397px;top:1247.0px;" width="15" height="15" viewBox="0 0 15 15"><path d="M9.5 1.6 H1.4 V13.6 H13.4 V6.5" stroke="#4d5055" stroke-width="2" fill="none" stroke-linejoin="miter"/><path d="M4.6 10.4 L5.2 7.8 L11.4 1.6 L13.4 3.6 L7.2 9.8 Z" fill="#4d5055"/></svg>
<div class="t" style="left:420px;top:1248.15px;font-size:14px;line-height:14px;color:#5c6066;letter-spacing:-0.1px;">Edit</div>
<svg class="r" style="left:463px;top:1247.0px;" width="14" height="15" viewBox="0 0 14 15"><path d="M0.3 3.8 H13.7" stroke="#4d5055" stroke-width="1.5"/><path d="M4.4 3.6 V0.9 H9.6 V3.6" stroke="#4d5055" stroke-width="1.5" fill="none"/><path d="M1.9 4 V13.1 H12.1 V4" stroke="#4d5055" stroke-width="1.5" fill="none"/><path d="M4.5 6 V11.3 M7 6 V11.3 M9.5 6 V11.3" stroke="#4d5055" stroke-width="1.15"/></svg>
<div class="t" style="left:485px;top:1248.15px;font-size:14px;line-height:14px;color:#5c6066;letter-spacing:-0.1px;">Delete</div>
<svg class="r" style="left:541.8px;top:1243.3px;" width="16" height="16" viewBox="0 0 16 16"><rect x="2" y="3" width="11" height="2.2" fill="#111"/><rect x="6" y="1" width="2.4" height="2.2" fill="#111"/><rect x="2" y="3" width="2.6" height="9.6" fill="#111"/><rect x="0" y="7" width="2.2" height="2.4" fill="#111"/><circle cx="10.5" cy="11" r="2.3" fill="none" stroke="#111" stroke-width="1.5"/><circle cx="10.5" cy="11" r="3.6" fill="none" stroke="#111" stroke-width="1.6" stroke-dasharray="1.2 1.63"/></svg>
<div class="t" style="left:564.2px;top:1244.65px;font-size:14px;line-height:14px;color:#1c2430;letter-spacing:-0.15px;">Column Settings</div>
<svg class="r" style="left:670px;top:1249.5px;" width="10" height="7" viewBox="0 0 10 7"><path d="M1 1 L5.0 5.5 L9 1" stroke="#1a1a1a" stroke-width="1.6" fill="none"/></svg>
<div class="r" style="left:1408px;top:1242px;width:187px;height:23px;background:#fff;border-radius:3px;"></div>
<svg class="r" style="left:1576px;top:1247px;" width="15" height="15" viewBox="0 0 15 15"><circle cx="6" cy="6" r="4.6" stroke="#111" stroke-width="2" fill="none"/><path d="M9.3 9.3 L13.5 13.5" stroke="#111" stroke-width="2.4"/></svg>
<div class="r" style="left:249px;top:1273px;width:1370px;height:37px;background:#fff;"></div>
<div class="r" style="left:805px;top:1277px;width:135px;height:30px;background:#0377cc;border-radius:3px;"></div>
<div class="t" style="left:572.5px;width:600px;text-align:center;top:1284.13px;font-size:14.5px;line-height:14.5px;color:#fff;">OK</div>
<div class="r" style="left:945px;top:1277px;width:135px;height:30px;background:#b9bdc5;border-radius:3px;"></div>
<div class="t" style="left:712.5px;width:600px;text-align:center;top:1284.55px;font-size:14px;line-height:14px;color:#333;letter-spacing:-0.1px;">Cancel</div>
<div class="r" style="left:1619px;top:81px;width:15px;height:1192px;background:#f1f1f1;"></div>
<div class="r" style="left:1621px;top:98px;width:13px;height:909px;background:#c1c1c1;"></div>
<svg class="r" style="left:1622px;top:85px;" width="10" height="8" viewBox="0 0 10 8"><path d="M1 6.5 L5 2.5 L9 6.5 Z" fill="#a3a3a3"/></svg>
<svg class="r" style="left:1622px;top:1262px;" width="10" height="8" viewBox="0 0 10 8"><path d="M1 1.5 L5 5.5 L9 1.5 Z" fill="#505050"/></svg>
</body></html>
